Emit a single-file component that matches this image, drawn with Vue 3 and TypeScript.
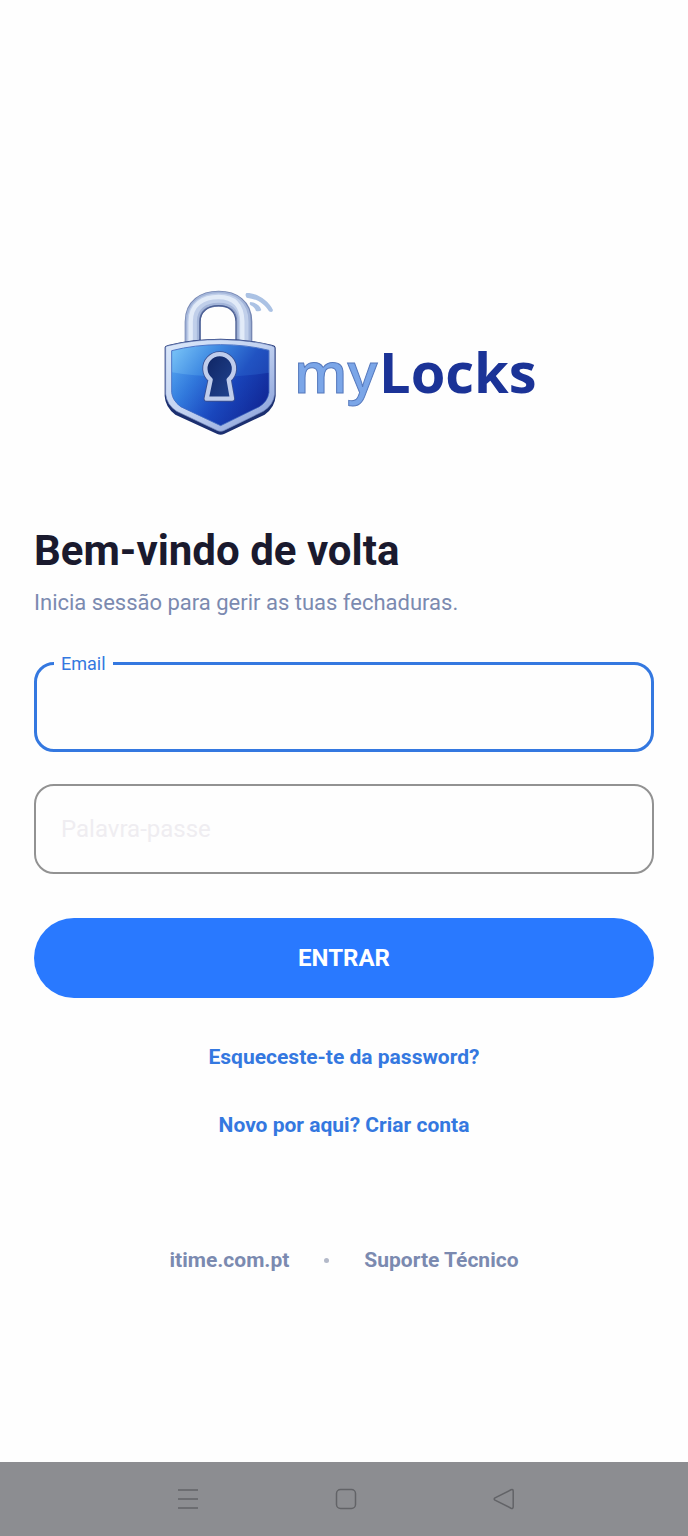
<script setup lang="ts">
import { reactive, ref } from 'vue'

type FieldId = 'email' | 'password'

interface Field {
  id: FieldId
  label: string
  type: string
  autocomplete: string
}

const fields: Field[] = [
  { id: 'email', label: 'Email', type: 'email', autocomplete: 'username' },
  { id: 'password', label: 'Palavra-passe', type: 'password', autocomplete: 'current-password' },
]

const values = reactive<Record<FieldId, string>>({ email: '', password: '' })
const active = ref<FieldId>('email')
</script>

<template>
  <div class="screen">
    <main class="content">
      <svg class="logo" viewBox="0 0 400 180" role="img" aria-label="myLocks">
        <defs>
          <linearGradient id="rim" x1="0" y1="0" x2="1" y2="1">
            <stop offset="0" stop-color="#dbe8fa" />
            <stop offset="0.5" stop-color="#c1d1f0" />
            <stop offset="1" stop-color="#8199d6" />
          </linearGradient>
          <linearGradient id="face" x1="0" y1="0.15" x2="1" y2="0.75">
            <stop offset="0" stop-color="#72bdf5" />
            <stop offset="0.3" stop-color="#3f8ae2" />
            <stop offset="0.62" stop-color="#2153c2" />
            <stop offset="1" stop-color="#1a3aa8" />
          </linearGradient>
          <linearGradient id="shade" x1="0" y1="0" x2="1" y2="0.3">
            <stop offset="0" stop-color="#2a7fe6" stop-opacity="0.4" />
            <stop offset="0.5" stop-color="#123fc0" stop-opacity="0.45" />
            <stop offset="1" stop-color="#0b1b8c" stop-opacity="0.55" />
          </linearGradient>
          <linearGradient id="hole" x1="0" y1="0" x2="1" y2="1">
            <stop offset="0" stop-color="#0f2462" />
            <stop offset="1" stop-color="#214592" />
          </linearGradient>
        </defs>
        <g transform="translate(6 5) scale(0.3333)">
          <g fill="none">
            <path d="M128 200V125C128 78 162 56 206 56C250 56 283 78 283 125V200" stroke="#7687b3" stroke-width="48" />
            <path d="M127 200V125C127 77 162 55 206 55C250 55 282 77 282 125V200" stroke="#a3b5d9" stroke-width="41" />
            <path d="M126 200V125C126 76 162 54 206 54C250 54 281 76 281 125V200" stroke="#c0cfea" stroke-width="29" />
            <path d="M122 200V125C122 72 160 51 206 51C248 51 276 72 277 125V200" stroke="#e2ebf8" stroke-width="13" />
            <path d="M150 190V125C150 95 174 77 206 77C237 77 258 95 258 125V190" stroke="#4b5f94" stroke-width="4" />
          </g>
          <path d="M289 39C318 38 354 59 369 90Q368 99 357 94C341 68 318 57 290 53Q284 46 289 39Z" fill="#abc2e4" />
          <path d="M301 66C317 67 330 76 334 90Q330 95 318 93C315 84 310 80 302 76Q297 71 301 66Z" fill="#abc2e4" />
          <path
            d="M44 202Q45 197 54 195Q130 176 212 176Q295 176 368 195Q377 197 377 203V348Q375 382 344 404L222 462Q212 467 202 462L76 404Q46 382 44 348Z"
            fill="#1b2f70"
          />
          <path
            d="M47 202Q48 198 56 197Q130 179 212 179Q295 179 365 197Q374 199 374 204V342Q371 374 340 394L221 452Q212 456 203 452L80 394Q50 374 47 342Z"
            fill="url(#rim)" stroke="#7388bd" stroke-width="2"
          />
          <path
            d="M65 212Q135 194 212 194Q290 194 357 211V338Q353 364 328 380L212 437L92 380Q68 362 65 338Z"
            fill="url(#face)" stroke="#4d75c7" stroke-width="3"
          />
          <path d="M66 277Q130 288 212 290Q290 289 356 278V338Q353 364 328 380L212 436L92 380Q68 362 66 338Z" fill="url(#shade)" />
          <path
            d="M182 299A43 43 0 1 1 236 299L246 356H170Z"
            fill="none" stroke="#3a4f91" stroke-width="18" stroke-linejoin="round"
          />
          <path
            d="M182 299A43 43 0 1 1 236 299L246 356H170Z"
            fill="url(#hole)" stroke="#bfcdec" stroke-width="13" stroke-linejoin="round"
          />
        </g>
        <text class="brand brand-my" x="150" y="118">my</text>
        <text class="brand brand-locks" x="235" y="118">Locks</text>
      </svg>

      <h1 class="title">Bem-vindo de volta</h1>
      <p class="subtitle">Inicia sessão para gerir as tuas fechaduras.</p>

      <form class="form" @submit.prevent>
        <div
          v-for="field in fields"
          :key="field.id"
          class="field"
          :class="{ active: active === field.id, floating: active === field.id || values[field.id] !== '' }"
        >
          <input
            :id="field.id"
            v-model="values[field.id]"
            class="input"
            :type="field.type"
            :autocomplete="field.autocomplete"
            @focus="active = field.id"
          >
          <label class="label" :for="field.id">{{ field.label }}</label>
        </div>
        <button class="submit" type="submit">ENTRAR</button>
      </form>

      <nav class="links">
        <a href="#recuperar">Esqueceste-te da password?</a>
        <a href="#registo">Novo por aqui? Criar conta</a>
      </nav>

      <footer class="footer">
        <a href="#itime">itime.com.pt</a>
        <span class="dot"></span>
        <a href="#suporte">Suporte Técnico</a>
      </footer>
    </main>

    <div class="system-bar">
      <button type="button" aria-label="Recentes">
        <svg viewBox="0 0 24 24"><path d="M2 3h20M2 12h20M2 21h20" /></svg>
      </button>
      <button type="button" aria-label="Início">
        <svg viewBox="0 0 24 24"><rect x="2.5" y="2.5" width="19" height="19" rx="4" /></svg>
      </button>
      <button type="button" aria-label="Voltar">
        <svg viewBox="0 0 24 24"><path d="M3 10.8L19 2.8Q21.2 2 21.2 4.2V19.8Q21.2 22 19 21.2L3 13.2Q1.4 12 3 10.8Z" /></svg>
      </button>
    </div>
  </div>
</template>

<style>
body {
  margin: 0;
  background: #fefefe;
}
</style>

<style scoped>
.screen {
  display: flex;
  flex-direction: column;
  min-height: 100vh;
  background: #fefefe;
  font-family: Roboto, "Liberation Sans", sans-serif;
}

.content {
  flex: 1;
  display: flex;
  flex-direction: column;
  justify-content: center;
  padding: 0 34px;
}

.logo {
  align-self: center;
  width: 400px;
  max-width: 100%;
  padding: 87px 0 70px;
}

.brand {
  font-family: "Open Sans", "Noto Sans", sans-serif;
  font-size: 56px;
}

.brand-my {
  font-weight: 600;
  fill: #7ba6e8;
  stroke: #5679bd;
  stroke-width: 1px;
}

.brand-locks {
  font-weight: 700;
  fill: #1b3397;
}

.title {
  margin: 0;
  color: #1a1a2e;
  font-size: 42px;
  font-weight: 700;
  line-height: 52px;
}

.subtitle {
  margin: 11px 0 0;
  color: #7b8ab0;
  font-size: 22px;
  line-height: 30px;
}

.form {
  display: flex;
  flex-direction: column;
  gap: 32px;
  margin-top: 44px;
}

.field {
  position: relative;
}

.input {
  display: block;
  box-sizing: border-box;
  width: 100%;
  height: 90px;
  padding: 0 26px;
  border: 2px solid #929292;
  border-radius: 20px;
  outline: none;
  background: transparent;
  color: #1a1a2e;
  font: inherit;
  font-size: 24px;
}

.active .input {
  border: 3px solid #3478e0;
}

.label {
  position: absolute;
  top: 30px;
  left: 20px;
  padding: 0 7px;
  background: #fefefe;
  color: #efedf1;
  font-size: 24px;
  line-height: 30px;
  pointer-events: none;
}

.floating .label {
  top: -8px;
  font-size: 18px;
  line-height: 20px;
}

.active .label {
  color: #3478e0;
}

.submit {
  height: 80px;
  margin-top: 12px;
  border: 0;
  border-radius: 40px;
  background: #2979ff;
  color: #fff;
  font: inherit;
  font-size: 24px;
  font-weight: 700;
  cursor: pointer;
}

.links {
  display: flex;
  flex-direction: column;
  align-items: center;
  margin-top: 25px;
}

.links a {
  color: #3478e0;
  font-size: 21px;
  font-weight: 700;
  line-height: 68px;
  text-decoration: none;
}

.footer {
  display: flex;
  align-items: center;
  justify-content: center;
  gap: 35px;
  margin-top: 87px;
}

.footer a {
  color: #7b8ab0;
  font-size: 21px;
  font-weight: 700;
  line-height: 28px;
  text-decoration: none;
}

.dot {
  width: 5px;
  height: 5px;
  border-radius: 50%;
  background: #b3b9c9;
}

.system-bar {
  display: flex;
  justify-content: center;
  gap: 110px;
  height: 74px;
  padding-left: 3px;
  background: #8c8d91;
}

.system-bar button {
  display: flex;
  align-items: center;
  justify-content: center;
  width: 48px;
  padding: 0;
  border: 0;
  background: none;
}

.system-bar svg {
  width: 24px;
  height: 24px;
  fill: none;
  stroke: #626367;
  stroke-width: 1.5;
}
</style>
